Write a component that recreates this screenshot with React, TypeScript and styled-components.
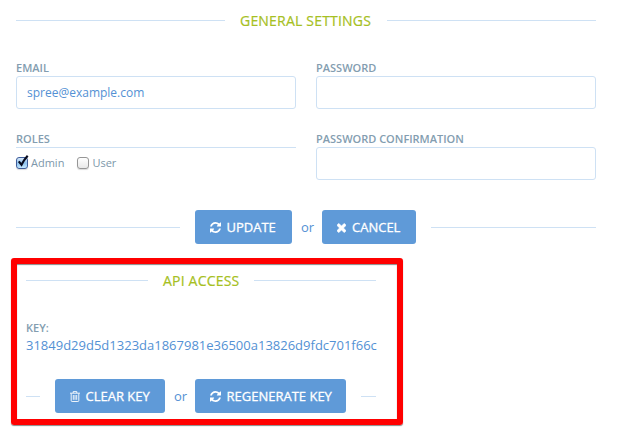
import React from "react";
import styled, { createGlobalStyle } from "styled-components";

const GlobalStyle = createGlobalStyle`
  * { box-sizing: border-box; }
  body {
    margin: 0;
    background: #fff;
    color: #5391d4;
    font: 13px/20px "Open Sans", sans-serif;
  }
`;

const Page = styled.main`
  width: 618px;
  height: 435px;
  padding: 10px 22px 0 16px;
  overflow: hidden;
`;

const Divider = styled.div`
  display: flex;
  align-items: center;
  gap: 15px;
  &::before,
  &::after {
    content: "";
    flex: 1;
    height: 1px;
    background: #cee1f4;
  }
`;

const Legend = styled.h2<{ $width: number }>`
  margin: 0;
  width: ${(p) => p.$width}px;
  height: 21px;
  font-size: 14px;
  line-height: 21px;
  font-weight: 400;
  letter-spacing: 0.2px;
  color: #a6c022;
  -webkit-text-stroke: 0.2px #a6c022;
  white-space: nowrap;
`;

const Columns = styled.div`
  display: grid;
  grid-template-columns: 280px 280px;
  column-gap: 20px;
  row-gap: 21px;
  margin-top: 28px;
`;

const Field = styled.div`
  display: flex;
  flex-direction: column;
`;

const Label = styled.label`
  height: 17px;
  font-size: 11px;
  line-height: 17px;
  font-weight: 600;
  color: #839db0;
  white-space: nowrap;
`;

const Input = styled.input`
  width: 280px;
  height: 33px;
  padding: 0 10px;
  border: 1px solid #cee1f4;
  border-radius: 3px;
  background: #fff;
  color: #5391d4;
  font: 12px "Open Sans", sans-serif;
  outline: none;
`;

const Roles = styled.div`
  display: flex;
  gap: 13px;
  height: 33px;
  padding-top: 6px;
  border-top: 1px solid #cee1f4;
`;

const Role = styled.label`
  display: flex;
  align-items: flex-start;
  gap: 3px;
  font-size: 11px;
  line-height: 18px;
  color: #7d97aa;
`;

const CheckBox = styled.span<{ $on?: boolean }>`
  width: 12px;
  height: 12px;
  margin-top: 3px;
  border: 1px solid ${(p) => (p.$on ? "#3f5d9b" : "#969696")};
  border-radius: 3px;
  background: ${(p) => (p.$on ? "linear-gradient(#d9eafa, #8fc2ee 50%, #c3e8ff)" : "linear-gradient(#fff, #e8e8e8)")};
  box-shadow: 0 1px 1px #00000026;
`;

const Tick = styled.svg`
  display: block;
  width: 13px;
  height: 13px;
  margin: -3px 0 0 0;
  overflow: visible;
`;

const Or = styled.span`
  width: 30px;
  padding-left: 1px;
  text-align: center;
  font-size: 13px;
`;

const Actions = styled(Divider)<{ $top: number; $lead: number }>`
  margin-top: ${(p) => p.$top}px;
  &::before {
    flex: 0 0 ${(p) => p.$lead}px;
  }
`;

const ButtonPair = styled.div`
  display: flex;
  align-items: center;
`;

const Button = styled.button<{ $width: number }>`
  display: flex;
  align-items: center;
  width: ${(p) => p.$width}px;
  height: 34px;
  padding: 0 0 0 15px;
  border: 0;
  border-radius: 3px;
  background: #5f9ad8;
  color: #fff;
  font: 400 13px "Open Sans", sans-serif;
  -webkit-text-stroke: 0.3px #fff;
  white-space: nowrap;
`;

const Glyph = styled.svg<{ $w: number; $gap: number }>`
  flex: none;
  width: ${(p) => p.$w}px;
  height: 11px;
  margin-right: ${(p) => p.$gap}px;
`;

const ApiBox = styled.section`
  width: 392px;
  height: 167px;
  margin: 14px 0 0 -5px;
  padding: 6px 21px 0 9px;
  border: 6px solid #f00;
  border-radius: 3px;
  box-shadow: 0 1px 1px #0007, inset 0 1px 1px #0007;
`;

const KeyBlock = styled.div`
  margin-top: 28px;
`;

const KeyValue = styled.div`
  height: 20px;
  font-size: 13px;
  line-height: 19px;
  white-space: nowrap;
`;

const Refresh = () => (
  <Glyph $w={11} $gap={5.5} viewBox="0 0 1536 1536" fill="currentColor">
    <path d="M1511 928q0 5-1 7-64 268-268 434.5t-478 166.5q-146 0-282.5-55t-243.5-157l-129 129q-19 19-45 19t-45-19-19-45v-448q0-26 19-45t45-19h448q26 0 45 19t19 45-19 45l-137 137q71 66 161 102t187 36q134 0 250-65t186-179q11-17 53-117 8-23 30-23h192q13 0 22.5 9.5t9.5 22.5zm25-800v448q0 26-19 45t-45 19h-448q-26 0-45-19t-19-45 19-45l138-138q-148-137-349-137-134 0-250 65t-186 179q-11 17-53 117-8 23-30 23h-199q-13 0-22.5-9.5t-9.5-22.5v-7q65-268 270-434.5t480-166.5q146 0 284 55.5t245 156.5l130-129q19-19 45-19t45 19 19 45z" />
  </Glyph>
);

const Times = () => (
  <Glyph $w={9} $gap={6} viewBox="302 238 1188 1316" fill="currentColor">
    <path d="M1490 1322q0 40-28 68l-136 136q-28 28-68 28t-68-28l-294-294-294 294q-28 28-68 28t-68-28l-136-136q-28-28-28-68t28-68l294-294-294-294q-28-28-28-68t28-68l136-136q28-28 68-28t68 28l294 294 294-294q28-28 68-28t68 28l136 136q28 28 28 68t-28 68l-294 294 294 294q28 28 28 68z" stroke="currentColor" strokeWidth="60" />
  </Glyph>
);

const Trash = () => (
  <Glyph $w={10} $gap={5.5} viewBox="0 0 10 11" fill="none" stroke="currentColor" strokeWidth="0.9">
    <path d="M0 2.2h10M3.2 2V.6h3.6V2M1.2 2.4v7.2q0 .9.9.9h5.8q.9 0 .9-.9V2.4M3.3 4v4.8M5 4v4.8M6.7 4v4.8" />
  </Glyph>
);

export default function App() {
  return (
    <>
      <GlobalStyle />
      <Page>
        <Divider>
          <Legend $width={132}>GENERAL SETTINGS</Legend>
        </Divider>
        <Columns>
          <Field>
            <Label>EMAIL</Label>
            <Input defaultValue="spree@example.com" />
          </Field>
          <Field>
            <Label>PASSWORD</Label>
            <Input type="password" />
          </Field>
          <Field>
            <Label>ROLES</Label>
            <Roles>
              <Role>
                <CheckBox $on>
                  <Tick viewBox="0 0 13 13" fill="none" stroke="#080c20" strokeWidth="2.2">
                    <path d="M1.8 6.3 4.5 9.8Q7 4.7 10.7.8" />
                  </Tick>
                </CheckBox>
                Admin
              </Role>
              <Role>
                <CheckBox />
                User
              </Role>
            </Roles>
          </Field>
          <Field>
            <Label>PASSWORD CONFIRMATION</Label>
            <Input type="password" />
          </Field>
        </Columns>
        <Actions $top={30} $lead={164}>
          <ButtonPair>
            <Button $width={97}><Refresh />UPDATE</Button>
            <Or>or</Or>
            <Button $width={94}><Times />CANCEL</Button>
          </ButtonPair>
        </Actions>
        <ApiBox>
          <Divider>
            <Legend $width={76}>API ACCESS</Legend>
          </Divider>
          <KeyBlock>
            <Label as="div">KEY:</Label>
            <KeyValue>31849d29d5d1323da1867981e36500a13826d9fdc701f66c</KeyValue>
          </KeyBlock>
          <Actions $top={23} $lead={14}>
            <ButtonPair>
              <Button $width={110}><Trash />CLEAR KEY</Button>
              <Or>or</Or>
              <Button $width={151}><Refresh />REGENERATE KEY</Button>
            </ButtonPair>
          </Actions>
        </ApiBox>
      </Page>
    </>
  );
}
